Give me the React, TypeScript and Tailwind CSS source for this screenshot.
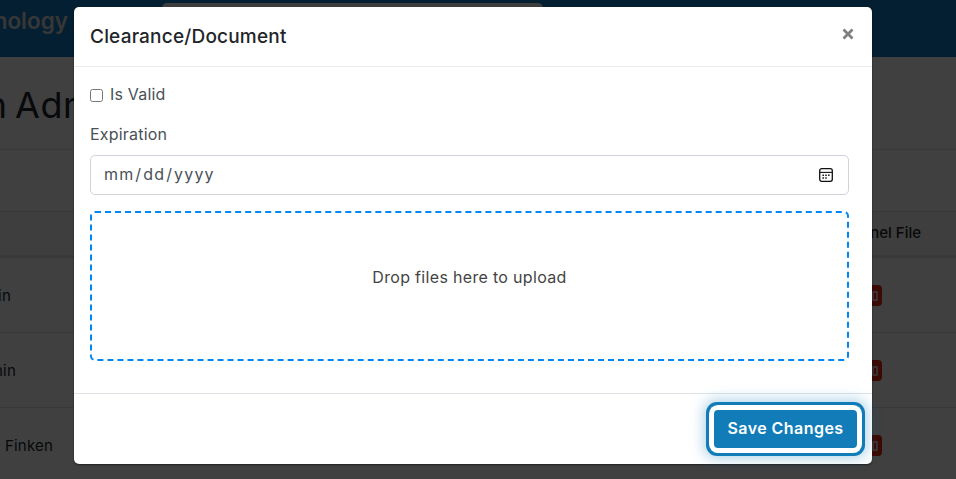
import React from "react";

const font = "font-['Inter','Noto_Sans',sans-serif]";

function TableRow({ name, nameClass }: { name: React.ReactNode; nameClass: string }) {
  return (
    <div className="flex h-[75px] shrink-0 items-center justify-between border-b border-[#dee2e6]">
      <div className={`flex justify-end overflow-hidden whitespace-nowrap pt-[2px] text-[15px] tracking-[0.2px] text-[#212529] ${nameClass}`}>{name}</div>
      <div className="relative mr-[74px] h-[21px] w-[22px] rounded-[4px] bg-[#f02a10]">
        <div className="absolute left-[12px] top-[6px] h-[10px] w-[6px] rounded-[1px] border-2 border-[#f0c0c0]" />
      </div>
    </div>
  );
}

function BackgroundPage() {
  return (
    <div className="flex h-full flex-col bg-white">
      <header className="flex h-[57px] shrink-0 items-start bg-[#0f7bc2]">
        <div className="mt-[4px] flex w-[68px] justify-end overflow-hidden whitespace-nowrap text-[22.5px] font-semibold text-[#d9d9d9]">Technology</div>
        <div className="ml-[94px] mt-[3px] h-[40px] w-[381px] rounded-[5px] bg-[#f2f2f2]" />
      </header>
      <div className="flex h-[93px] shrink-0 items-center overflow-hidden border-b border-[#dee2e6] pt-[4px]">
        <div className="flex w-[126px] shrink-0 justify-end overflow-hidden whitespace-nowrap text-[36px] tracking-[0.5px] text-[#212529] [word-spacing:-3px]">Station Admin</div>
      </div>
      <div className="h-[62px] shrink-0 border-b border-[#dee2e6]" />
      <div className="flex h-[46px] shrink-0 items-center justify-end border-b-[3px] border-[#dee2e6] bg-[#f5f5f5] pr-[35px] text-[15px] font-medium text-[#212529]">Channel File</div>
      <TableRow name="Admin" nameClass="w-[11px]" />
      <TableRow name="Admin" nameClass="w-[16px]" />
      <TableRow name={<><span className="text-[#0f7bc2]">Anna</span>&nbsp;&nbsp;Finken</>} nameClass="w-[53px]" />
    </div>
  );
}

function CalendarIcon() {
  return (
    <svg width="14" height="14" viewBox="0 0 14 14" className="absolute right-[16px] top-[13px]" fill="none">
      <rect x="0.7" y="0.7" width="12.6" height="12.6" rx="2" stroke="#111" strokeWidth="1.3" />
      <path d="M1 4.4h12" stroke="#111" strokeWidth="1.1" />
      <path d="M3.4 6.4h1.6v1.5H3.4zM6.2 6.4h1.6v1.5H6.2zM9 6.4h1.6v1.5H9zM3.4 9.2h1.6v1.5H3.4zM6.2 9.2h1.6v1.5H6.2z" fill="#222" />
    </svg>
  );
}

function ClearanceModal() {
  return (
    <div className="absolute inset-0 overflow-hidden bg-black/75">
      <div className="absolute left-[74px] top-[7px] flex h-[457px] w-[798px] flex-col rounded-[5px] bg-white shadow-[0_1px_2px_rgba(0,0,0,0.5)]">
        <div className="flex h-[60px] shrink-0 items-center justify-between border-b border-[#e9ecef] pl-4 pr-[18px] pt-[2px]">
          <h5 className="text-[19px] font-medium tracking-[0.2px] text-[#212529]">Clearance/Document</h5>
          <svg width="12" height="12" viewBox="0 0 12 12" className="mb-[7px]">
            <path d="M1.5 1.5 10.5 10.5M10.5 1.5 1.5 10.5" stroke="#7f7f7f" strokeWidth="2.8" />
          </svg>
        </div>
        <div className="flex flex-1 flex-col px-4 pt-[19px] text-[16px] tracking-[0.2px] text-[#495057]">
          <label className="flex h-[16px] items-center">
            <input type="checkbox" className="m-0 h-[13px] w-[13px] translate-y-[1px]" />
            <span className="ml-[7px]">Is Valid</span>
          </label>
          <label className="mt-[24px] block h-[16px] leading-[16px]">Expiration</label>
          <div className="relative mt-[13px] h-[40px] w-[759px]">
            <input
              type="date"
              className="h-full w-full rounded-[5px] border border-[#ced4da] px-[12px] pb-[3px] text-[16px] tracking-[1.15px] text-[#495057] [&::-webkit-calendar-picker-indicator]:opacity-0"
            />
            <CalendarIcon />
          </div>
          <div className="mt-[16px] flex h-[150px] w-[759px] items-center justify-center rounded-[5px] border-2 border-dashed border-[#0087f7] pb-[18px] text-[16px] tracking-[0.32px] text-[#444]">
            Drop files here to upload
          </div>
        </div>
        <div className="flex h-[71px] shrink-0 items-center justify-end border-t border-[#dee2e6] pr-[15px]">
          <button className="h-[38px] w-[143px] rounded-[4px] bg-[#117cb8] pb-[2px] text-[16px] font-semibold tracking-[0.45px] text-white shadow-[0_0_0_5px_#fff,0_0_0_8px_#117cb8,0_0_14px_10px_rgba(17,124,184,0.35)]">
            Save Changes
          </button>
        </div>
      </div>
    </div>
  );
}

export default function App() {
  return (
    <div className={`relative h-[479px] w-[956px] overflow-hidden ${font}`}>
      <BackgroundPage />
      <ClearanceModal />
    </div>
  );
}
